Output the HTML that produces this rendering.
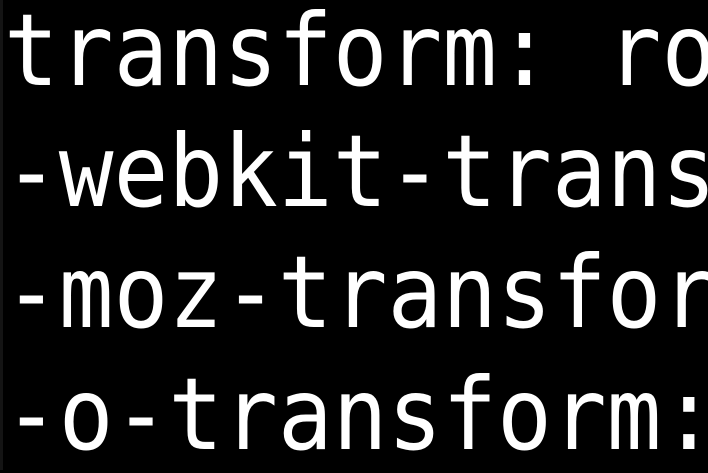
<!DOCTYPE html>
<html><head><style>
html,body{margin:0;padding:0;width:708px;height:470px;background:#000;overflow:hidden}
.l{position:absolute;left:4px;font-family:"DejaVu Sans Mono","Liberation Mono",monospace;font-size:91px;line-height:91px;color:#fff;white-space:pre;transform:scaleY(1.1);transform-origin:0 77px}
.strip{position:absolute;left:0;top:0;width:3px;height:470px;background:#141414}
</style></head><body>
<div class="strip"></div>
<div class="l" style="top:9px">transform: ro</div>
<div class="l" style="top:130px">-webkit-trans</div>
<div class="l" style="top:251px">-moz-transfor</div>
<div class="l" style="top:373px">-o-transform:</div>
</body></html>
